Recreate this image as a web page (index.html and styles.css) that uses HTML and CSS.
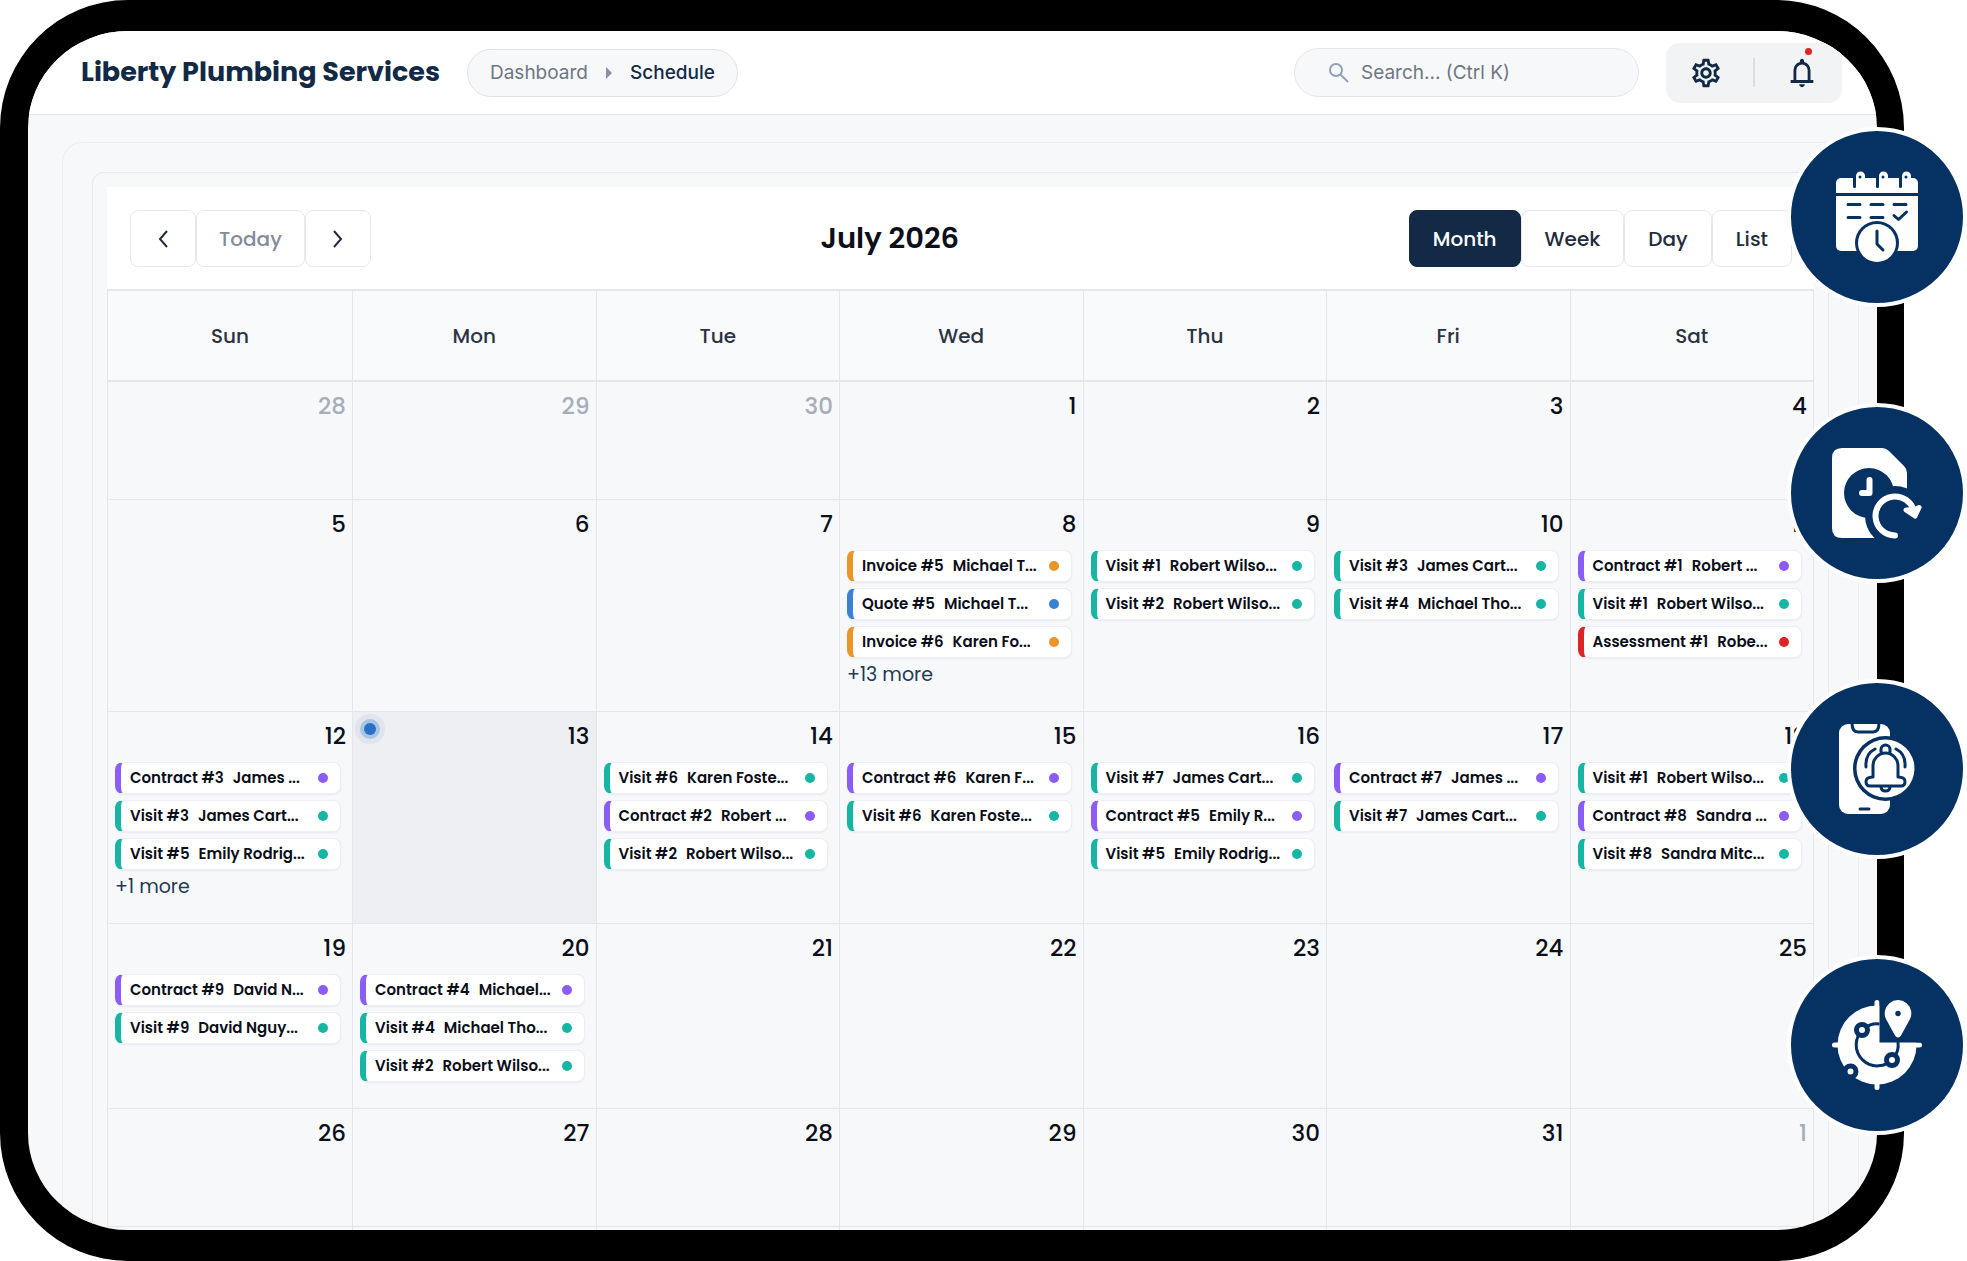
FILE: index.html
```html
<!DOCTYPE html>
<html lang="en">
<head>
  <meta charset="UTF-8" />
  <meta name="viewport" content="width=device-width, initial-scale=1.0"/>
  <title>Schedule - Liberty Plumbing Services</title>
  <link rel="stylesheet" href="styles.css">
</head>
<body>

<div class="stage">
  <div class="device">

    <!-- Top bar -->
    <header class="topbar">
      <h1>Liberty Plumbing Services</h1>
      <nav class="crumbs">
        <a href="#">Dashboard</a>
        <svg width="6" height="12" viewBox="0 0 6 12"><path d="M0 0l6 6-6 6z" fill="#8590a6"/></svg>
        <a href="#" class="current">Schedule</a>
      </nav>
      <label class="search">
        <svg width="22" height="22" viewBox="0 0 22 22" fill="none" stroke="#94a0b8" stroke-width="2"><circle cx="8" cy="8" r="6"/><path d="M12.5 12.5L20 20"/></svg>
        <input type="text" placeholder="Search... (Ctrl K)" aria-label="Search">
      </label>
      <div class="actions">
        <button class="icon-btn" aria-label="Settings">
          <svg width="34" height="34" viewBox="0 0 24 24" fill="currentColor"><path d="M19.43 12.98c.04-.32.07-.64.07-.98 0-.34-.03-.66-.07-.98l2.11-1.65c.19-.15.24-.42.12-.64l-2-3.46c-.09-.16-.26-.25-.44-.25-.06 0-.12.01-.17.03l-2.49 1c-.52-.4-1.08-.73-1.69-.98l-.38-2.65C14.46 2.18 14.25 2 14 2h-4c-.25 0-.46.18-.49.42l-.38 2.65c-.61.25-1.17.59-1.69.98l-2.49-1c-.06-.02-.12-.03-.18-.03-.17 0-.34.09-.43.25l-2 3.46c-.13.22-.07.49.12.64l2.11 1.65c-.04.32-.07.65-.07.98 0 .33.03.66.07.98l-2.11 1.65c-.19.15-.24.42-.12.64l2 3.46c.09.16.26.25.44.25.06 0 .12-.01.17-.03l2.49-1c.52.4 1.08.73 1.69.98l.38 2.65c.03.24.24.42.49.42h4c.25 0 .46-.18.49-.42l.38-2.65c.61-.25 1.17-.59 1.69-.98l2.49 1c.06.02.12.03.18.03.17 0 .34-.09.43-.25l2-3.46c.12-.22.07-.49-.12-.64l-2.11-1.65zm-1.98-1.71c.04.31.05.52.05.73 0 .21-.02.43-.05.73l-.14 1.13.89.7 1.08.84-.7 1.21-1.27-.51-1.04-.42-.9.68c-.43.32-.84.56-1.25.73l-1.06.43-.16 1.13-.2 1.35h-1.4l-.19-1.35-.16-1.13-1.06-.43c-.43-.18-.83-.41-1.23-.71l-.91-.7-1.06.43-1.27.51-.7-1.21 1.08-.84.89-.7-.14-1.13c-.03-.31-.05-.54-.05-.74s.02-.43.05-.73l.14-1.13-.89-.7-1.08-.84.7-1.21 1.27.51 1.04.42.9-.68c.43-.32.84-.56 1.25-.73l1.06-.43.16-1.13.2-1.35h1.39l.19 1.35.16 1.13 1.06.43c.43.18.83.41 1.23.71l.91.7 1.06-.43 1.27-.51.7 1.21-1.07.85-.89.7.14 1.13zM12 8c-2.21 0-4 1.79-4 4s1.79 4 4 4 4-1.79 4-4-1.79-4-4-4zm0 6c-1.1 0-2-.9-2-2s.9-2 2-2 2 .9 2 2-.9 2-2 2z"/></svg>
        </button>
        <span class="divider"></span>
        <button class="icon-btn" aria-label="Notifications">
          <svg width="34" height="34" viewBox="0 0 24 24" fill="currentColor"><path d="M4 19v-2h2v-7q0-2.075 1.25-3.687T10.5 4.2v-.7q0-.625.438-1.062T12 2t1.063.438T13.5 3.5v.7q2 .5 3.25 2.113T18 10v7h2v2zm8 3q-.825 0-1.412-.587T10 20h4q0 .825-.587 1.413T12 22m-4-5h8v-7q0-1.65-1.175-2.825T12 6T9.175 7.175T8 10z"/></svg>
          <span class="alert-dot"></span>
        </button>
      </div>
    </header>

    <!-- Calendar -->
    <main class="panel">
      <div class="card">
        <div class="toolbar">
          <div class="btn-group">
            <button class="btn arrow" aria-label="Previous month"><svg width="12" height="18" viewBox="0 0 12 18"><path d="M10 1L3 9l7 8"/></svg></button>
            <button class="btn today-btn">Today</button>
            <button class="btn arrow" aria-label="Next month"><svg width="12" height="18" viewBox="0 0 12 18"><path d="M2 1l7 8-7 8"/></svg></button>
          </div>
          <h2>July 2026</h2>
          <div class="btn-group">
            <button class="btn active">Month</button>
            <button class="btn">Week</button>
            <button class="btn">Day</button>
            <button class="btn">List</button>
          </div>
        </div>

        <table class="calendar">
          <thead>
            <tr><th class="first">Sun</th><th>Mon</th><th>Tue</th><th>Wed</th><th>Thu</th><th>Fri</th><th>Sat</th></tr>
          </thead>
          <tbody>
            <tr class="short">
              <td class="other"><span class="num">28</span></td>
              <td class="other"><span class="num">29</span></td>
              <td class="other"><span class="num">30</span></td>
              <td><span class="num">1</span></td>
              <td><span class="num">2</span></td>
              <td><span class="num">3</span></td>
              <td><span class="num">4</span></td>
            </tr>
            <tr class="tall">
              <td><span class="num">5</span></td>
              <td><span class="num">6</span></td>
              <td><span class="num">7</span></td>
              <td>
                <span class="num">8</span>
                <a href="#" class="event invoice"><b>Invoice #5</b><span>Michael T...</span></a>
                <a href="#" class="event quote"><b>Quote #5</b><span>Michael T...</span></a>
                <a href="#" class="event invoice"><b>Invoice #6</b><span>Karen Fo...</span></a>
                <a href="#" class="more">+13 more</a>
              </td>
              <td>
                <span class="num">9</span>
                <a href="#" class="event visit"><b>Visit #1</b><span>Robert Wilso...</span></a>
                <a href="#" class="event visit"><b>Visit #2</b><span>Robert Wilso...</span></a>
              </td>
              <td>
                <span class="num">10</span>
                <a href="#" class="event visit"><b>Visit #3</b><span>James Cart...</span></a>
                <a href="#" class="event visit"><b>Visit #4</b><span>Michael Tho...</span></a>
              </td>
              <td>
                <span class="num">11</span>
                <a href="#" class="event contract"><b>Contract #1</b><span>Robert ...</span></a>
                <a href="#" class="event visit"><b>Visit #1</b><span>Robert Wilso...</span></a>
                <a href="#" class="event assessment"><b>Assessment #1</b><span>Robe...</span></a>
              </td>
            </tr>
            <tr class="tall">
              <td>
                <span class="num">12</span>
                <a href="#" class="event contract"><b>Contract #3</b><span>James ...</span></a>
                <a href="#" class="event visit"><b>Visit #3</b><span>James Cart...</span></a>
                <a href="#" class="event visit"><b>Visit #5</b><span>Emily Rodrig...</span></a>
                <a href="#" class="more">+1 more</a>
              </td>
              <td class="today"><span class="pulse"></span><span class="num">13</span></td>
              <td>
                <span class="num">14</span>
                <a href="#" class="event visit"><b>Visit #6</b><span>Karen Foste...</span></a>
                <a href="#" class="event contract"><b>Contract #2</b><span>Robert ...</span></a>
                <a href="#" class="event visit"><b>Visit #2</b><span>Robert Wilso...</span></a>
              </td>
              <td>
                <span class="num">15</span>
                <a href="#" class="event contract"><b>Contract #6</b><span>Karen F...</span></a>
                <a href="#" class="event visit"><b>Visit #6</b><span>Karen Foste...</span></a>
              </td>
              <td>
                <span class="num">16</span>
                <a href="#" class="event visit"><b>Visit #7</b><span>James Cart...</span></a>
                <a href="#" class="event contract"><b>Contract #5</b><span>Emily R...</span></a>
                <a href="#" class="event visit"><b>Visit #5</b><span>Emily Rodrig...</span></a>
              </td>
              <td>
                <span class="num">17</span>
                <a href="#" class="event contract"><b>Contract #7</b><span>James ...</span></a>
                <a href="#" class="event visit"><b>Visit #7</b><span>James Cart...</span></a>
              </td>
              <td>
                <span class="num">18</span>
                <a href="#" class="event visit"><b>Visit #1</b><span>Robert Wilso...</span></a>
                <a href="#" class="event contract"><b>Contract #8</b><span>Sandra ...</span></a>
                <a href="#" class="event visit"><b>Visit #8</b><span>Sandra Mitc...</span></a>
              </td>
            </tr>
            <tr class="medium">
              <td>
                <span class="num">19</span>
                <a href="#" class="event contract"><b>Contract #9</b><span>David N...</span></a>
                <a href="#" class="event visit"><b>Visit #9</b><span>David Nguy...</span></a>
              </td>
              <td>
                <span class="num">20</span>
                <a href="#" class="event contract"><b>Contract #4</b><span>Michael...</span></a>
                <a href="#" class="event visit"><b>Visit #4</b><span>Michael Tho...</span></a>
                <a href="#" class="event visit"><b>Visit #2</b><span>Robert Wilso...</span></a>
              </td>
              <td><span class="num">21</span></td>
              <td><span class="num">22</span></td>
              <td><span class="num">23</span></td>
              <td><span class="num">24</span></td>
              <td><span class="num">25</span></td>
            </tr>
            <tr class="short">
              <td><span class="num">26</span></td>
              <td><span class="num">27</span></td>
              <td><span class="num">28</span></td>
              <td><span class="num">29</span></td>
              <td><span class="num">30</span></td>
              <td><span class="num">31</span></td>
              <td class="other"><span class="num">1</span></td>
            </tr>
            <tr class="peek"><td></td><td></td><td></td><td></td><td></td><td></td><td></td></tr>
          </tbody>
        </table>
      </div>
    </main>
  </div>

  <!-- Feature badges over the device edge -->
  <div class="badges">
    <svg class="badge" viewBox="0 0 180 180">
      <circle class="disc" cx="90" cy="90" r="88"/>
      <rect class="w" x="49" y="51" width="82" height="73" rx="5"/>
      <path class="line" d="M49 67.5h82"/>
      <g id="ring">
        <path class="w" d="M69 60V49a4.5 4.5 0 0 1 9 0v11z"/>
        <path class="line" d="M67.5 49v10.5" stroke-linecap="round"/>
        <circle class="n" cx="73" cy="50" r="1.5"/>
      </g>
      <use href="#ring" x="23"/>
      <use href="#ring" x="46"/>
      <path class="line round" d="M61 77.5h12M84 77.5h12M107 77.5h12M61 90.5h12M84 90.5h12M107 88.5l4.500 4 8-7.500"/>
      <circle class="n" cx="90" cy="116" r="22"/>
      <circle class="w" cx="90" cy="116" r="19"/>
      <path class="line round" d="M90 104v13l6 6"/>
    </svg>

    <svg class="badge" viewBox="0 0 180 180">
      <circle class="disc" cx="90" cy="90" r="88"/>
      <path class="w" d="M55 45h40q4 0 7 3l15 15q3 3 3 7v65H55q-10 0-10-10V55q0-10 10-10z"/>
      <circle class="n" cx="82" cy="90" r="25"/>
      <circle class="n" cx="108" cy="113" r="30"/>
      <path class="wline" d="M82.5 77v13H75" stroke-width="6"/>
      <path class="wline" d="M108 132.5a19.5 19.5 0 1 1 19-24" stroke-width="6"/>
      <path class="arrowhead" d="M119 107l9 6 4-8.500-4 2z"/>
    </svg>

    <svg class="badge" viewBox="0 0 180 180">
      <circle class="disc" cx="90" cy="90" r="88"/>
      <rect class="w" x="52" y="45" width="51" height="90" rx="9"/>
      <path class="line" d="M65 44q0 9 6 9h15q6 0 6-9"/>
      <path class="line round" d="M73 130h9"/>
      <circle class="n" cx="98.5" cy="89.5" r="32.5"/>
      <circle class="w" cx="98.5" cy="89.5" r="29"/>
      <path class="line round" d="M86 98V87a12.5 13 0 0 1 25 0v11q7 0 7 4.500t-4 4.500H83q-4 0-4-4.500t7-4.500M94 73v-2.500a4.500 4.500 0 0 1 9 0V73M94 107.5q0 4.500 4.500 4.500t4.500-4.500M79 88q-1-13 9-18M118 88q1-13-9-18"/>
    </svg>

    <svg class="badge" viewBox="0 0 180 180">
      <circle class="disc" cx="90" cy="90" r="88"/>
      <circle class="w" cx="90" cy="90" r="39.5"/>
      <path class="wline" d="M90 47.5v85M47.5 90h85" stroke-width="5"/>
      <path class="n" d="M92.5 40h45v47.500h-45z"/>
      <path class="line" d="M92.5 69A21 21 0 1 0 111 87" stroke-width="5"/>
      <circle class="node" cx="75" cy="75" r="5.5"/>
      <circle class="node" cx="105" cy="105" r="5.5"/>
      <circle class="node" cx="63.5" cy="116.5" r="5.5"/>
      <path class="w" d="M111 82.5q-2 0-3-2L99.5 65a13.3 13.3 0 1 1 23 0L114 80.5q-1 2-3 2z"/>
      <circle class="n" cx="111" cy="58.5" r="2.7"/>
    </svg>
  </div>
</div>

</body>
</html>
```
FILE: styles.css
```css
* {
  box-sizing: border-box;
}

body {
  margin: 0;
  background: #fff;
  font-family: Poppins, Inter, sans-serif;
  color: #0b0f1a;
}

a {
  color: inherit;
  text-decoration: none;
}

button, input {
  font: inherit;
  color: inherit;
}

.stage {
  position: relative;
  padding-right: 63px;
}

.device {
  min-height: 100vh;
  border: solid #000;
  border-width: 31px 27px 31px 28px;
  border-radius: 128px;
  background: #f7f8fa;
  overflow: hidden;
}

/* top bar */
.topbar {
  display: flex;
  align-items: center;
  height: 84px;
  padding: 0 35px 0 53px;
  background: #fff;
  border-bottom: 1px solid #e4e6ee;
}

h1 {
  margin: 0;
  padding-bottom: 2px;
  font-size: 27px;
  font-weight: 700;
  line-height: 40px;
  color: #122a46;
  white-space: nowrap;
}

.crumbs {
  display: flex;
  align-items: center;
  gap: 18px;
  height: 48px;
  margin-left: 27px;
  padding: 0 22px;
  border: 1px solid #dfe2e9;
  border-radius: 24px;
  background: #f7f8fa;
  font-family: Inter, sans-serif;
  font-size: 19px;
  color: #6f7683;
}

.crumbs .current {
  color: #122a46;
  font-weight: 500;
}

.search {
  display: flex;
  align-items: center;
  gap: 11px;
  width: 345px;
  height: 49px;
  margin-left: auto;
  padding: 0 33px;
  border: 1px solid #e2e5ec;
  border-radius: 25px;
  background: #f7f8fa;
}

.search input {
  flex: 1;
  min-width: 0;
  padding: 0;
  border: none;
  background: none;
  outline: none;
  font-family: Inter, sans-serif;
  font-size: 19px;
}

.search input::placeholder {
  color: #6f7683;
  opacity: 1;
}

.actions {
  display: flex;
  align-items: center;
  justify-content: space-between;
  width: 176px;
  height: 60px;
  margin-left: 27px;
  padding: 0 23px;
  border-radius: 14px;
  background: #f2f3f5;
}

.icon-btn {
  position: relative;
  display: flex;
  padding: 0;
  border: none;
  background: none;
  color: #122a46;
  cursor: pointer;
}

.divider {
  width: 2px;
  height: 29px;
  background: #dadde5;
}

.alert-dot {
  position: absolute;
  top: -8px;
  right: 7px;
  width: 7px;
  height: 7px;
  border-radius: 50%;
  background: #e02424;
}

/* calendar panel */
.panel {
  margin: 27px 18px 0 34px;
  padding: 29px 29px 0;
  border: 1px solid #eceef3;
  border-bottom: none;
  border-radius: 20px 20px 0 0;
}

.card {
  padding: 14px 14px 0;
  border: 1px solid #e6e8ee;
  border-bottom: none;
  border-radius: 12px 12px 0 0;
}

.toolbar {
  display: flex;
  align-items: center;
  justify-content: space-between;
  padding: 23px 22px 22px 23px;
  background: #fff;
}

.toolbar h2 {
  margin: 0;
  padding-bottom: 2px;
  font-size: 29px;
  font-weight: 600;
  line-height: 40px;
}

.btn-group {
  display: flex;
}

.btn {
  height: 57px;
  padding: 0 23px;
  border: 1px solid #e6e8ee;
  border-radius: 8px;
  background: #fff;
  font-size: 20px;
  font-weight: 500;
  color: #1f2d3d;
  cursor: pointer;
}

.btn.active {
  border-color: #122a46;
  background: #122a46;
  color: #fff;
}

.btn.today-btn {
  padding: 0 22px;
  color: #858c99;
}

.arrow {
  display: flex;
  align-items: center;
  justify-content: center;
  width: 66px;
}

.arrow path {
  fill: none;
  stroke: #1f2d3d;
  stroke-width: 2;
}

.calendar {
  width: 100%;
  table-layout: fixed;
  border-collapse: collapse;
}

.calendar th, .calendar td {
  padding: 0;
  border: 1px solid #e4e6ec;
}

.calendar th {
  height: 91px;
  border-top: 2px solid #e4e6ec;
  border-bottom: 2px solid #e4e6ec;
  background: #f9fafb;
  font-size: 20px;
  font-weight: 500;
  color: #2b3442;
}

.calendar .first {
  width: 245px;
}

.calendar td {
  position: relative;
  vertical-align: top;
}

.short td {
  height: 118px;
}

.tall td {
  height: 212px;
}

.medium td {
  height: 185px;
}

.peek td {
  height: 4px;
  border-bottom: none;
}

.num {
  display: block;
  padding: 8px 6px 10px 0;
  font-size: 23px;
  font-weight: 500;
  line-height: 32px;
  text-align: right;
}

.other .num {
  color: #a6adbb;
}

.today {
  background: #eeeff3;
}

.pulse {
  position: absolute;
  top: 11px;
  left: 11px;
  width: 12px;
  height: 12px;
  border-radius: 50%;
  background: #2a70c8;
  box-shadow: 0 0 0 4px #a8c5e4, 0 0 0 9px #e0e4ec;
}

.event {
  --tone: #17b5a4;
  display: flex;
  align-items: center;
  gap: 9px;
  height: 32px;
  margin: 0 11px 6px 7px;
  padding: 0 12px 0 9px;
  border: 1px solid #eceef3;
  border-left: 6px solid var(--tone);
  border-radius: 8px;
  background: #fff;
  box-shadow: 0 1px 2px rgba(20, 30, 60, 0.06);
  font-size: 15px;
  font-weight: 600;
  line-height: 22px;
  white-space: nowrap;
}

.event b {
  font-weight: 600;
}

.event::after {
  content: "";
  width: 10px;
  height: 10px;
  margin-left: auto;
  border-radius: 50%;
  background: var(--tone);
}

.contract {
  --tone: #8b5cf6;
}

.invoice {
  --tone: #ea9528;
}

.quote {
  --tone: #3a82d4;
}

.assessment {
  --tone: #dc2626;
}

.more {
  display: block;
  margin-left: 7px;
  font-size: 19px;
  line-height: 22px;
  color: #233a55;
}

/* badges */
.badges {
  position: absolute;
  top: 127px;
  right: 0;
  display: flex;
  flex-direction: column;
  gap: 96px;
}

.badge {
  display: block;
  width: 180px;
  height: 180px;
}

.disc {
  fill: #053163;
  stroke: #fff;
  stroke-width: 4;
}

.w {
  fill: #fff;
}

.n {
  fill: #053163;
}

.line {
  fill: none;
  stroke: #053163;
  stroke-width: 3;
}

.round {
  stroke-linecap: round;
  stroke-linejoin: round;
}

.wline {
  fill: none;
  stroke: #fff;
  stroke-linecap: round;
  stroke-linejoin: round;
}

.arrowhead {
  fill: #fff;
  stroke: #fff;
  stroke-width: 5;
  stroke-linejoin: round;
}

.node {
  fill: #fff;
  stroke: #053163;
  stroke-width: 5;
}
```
